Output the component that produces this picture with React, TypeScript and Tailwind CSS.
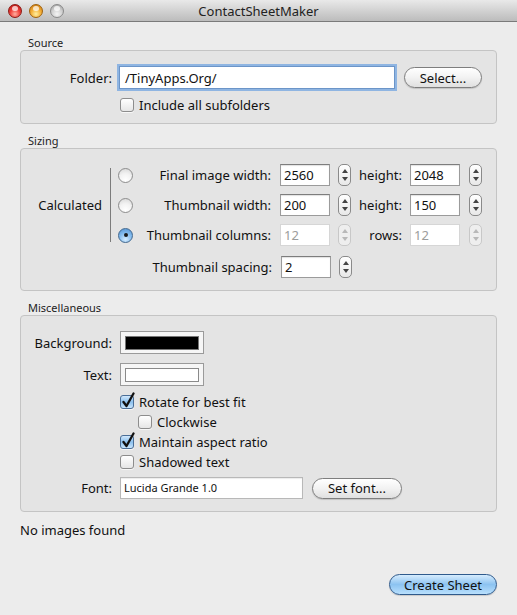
import type { ReactNode } from "react"

const font = "font-['Lucida_Grande','Noto_Sans','DejaVu_Sans',sans-serif]"

function Light({ color }: { color: "red" | "yellow" | "gray" }) {
  const fill =
    color === "red"
      ? "bg-[radial-gradient(circle_at_50%_75%,#ffb0a0_0%,#f0413a_45%,#b01010_100%)] border-[#8c1a14]"
      : color === "yellow"
      ? "bg-[radial-gradient(circle_at_50%_75%,#fff0a0_0%,#f5b23a_45%,#c4700c_100%)] border-[#a0620c]"
      : "bg-[radial-gradient(circle_at_50%_75%,#f4f4f4_0%,#cfcfcf_50%,#9a9a9a_100%)] border-[#8a8a8a]"
  return (
    <div className={`relative h-[14px] w-[14px] rounded-full border ${fill}`}>
      <div className="absolute left-[3px] top-[1px] h-[5px] w-[6px] rounded-full bg-white/70" />
    </div>
  )
}

function Group({ label, children, className = "" }: { label: string; children: ReactNode; className?: string }) {
  return (
    <div>
      <div className="pl-[8px] text-[11px] leading-[14px] text-[#222]">{label}</div>
      <div className={`rounded-[4px] border border-[#c4c4c4] bg-[#e4e4e4] ${className}`}>{children}</div>
    </div>
  )
}

function Check({ checked = false }: { checked?: boolean }) {
  return (
    <div
      className={`relative h-[14px] w-[14px] shrink-0 rounded-[3px] border ${
        checked
          ? "border-[#4a6e97] bg-gradient-to-b from-[#d2e8fb] via-[#8bc0ee] to-[#c9e6fd]"
          : "border-[#8d8d8d] bg-gradient-to-b from-[#ffffff] to-[#e6e6e6]"
      } shadow-[0_1px_0_rgba(255,255,255,0.7)]`}
    >
      {checked && (
        <svg className="absolute -top-[4px] left-[0px]" width="15" height="17" viewBox="0 0 15 17">
          <path d="M2.5 10 L5.5 14 L12.5 1.5" fill="none" stroke="#111" strokeWidth="2.3" strokeLinecap="round" strokeLinejoin="round" />
        </svg>
      )}
    </div>
  )
}

function Radio({ on = false }: { on?: boolean }) {
  return (
    <div
      className={`flex h-[15px] w-[15px] shrink-0 items-center justify-center rounded-full border ${
        on
          ? "border-[#41688f] bg-[radial-gradient(circle_at_50%_80%,#d4ecff_0%,#7fb8ec_55%,#4f8fd0_100%)]"
          : "border-[#8d8d8d] bg-[radial-gradient(circle_at_50%_85%,#ffffff_0%,#f2f2f2_50%,#d4d4d4_100%)]"
      }`}
    >
      {on && <div className="h-[4px] w-[4px] rounded-full bg-[#1a1a1a]" />}
    </div>
  )
}

function Stepper({ disabled = false }: { disabled?: boolean }) {
  const c = disabled ? "#b8b8b8" : "#444"
  return (
    <div
      className={`flex h-[22px] w-[13px] flex-col items-center justify-between rounded-[5px] border py-[4px] ${
        disabled ? "border-[#c8c8c8] bg-[#eeeeee]" : "border-[#8a8a8a] bg-gradient-to-b from-white to-[#e8e8e8]"
      }`}
    >
      <svg width="6" height="4" viewBox="0 0 6 4">
        <path d="M3 0 L6 4 L0 4 Z" fill={c} />
      </svg>
      <svg width="6" height="4" viewBox="0 0 6 4">
        <path d="M0 0 L6 0 L3 4 Z" fill={c} />
      </svg>
    </div>
  )
}

function Field({ value, w, disabled = false }: { value: string; w: string; disabled?: boolean }) {
  return (
    <div
      className={`flex h-[22px] ${w} items-center border bg-white pl-[3px] text-[13px] ${
        disabled
          ? "border-[#d6d6d6] text-[#9c9c9c]"
          : "border-[#9b9b9b] border-t-[#7d7d7d] text-[#111] shadow-[inset_0_1px_1px_rgba(0,0,0,0.12)]"
      }`}
    >
      {value}
    </div>
  )
}

function Pill({ children, w, blue = false }: { children: ReactNode; w: string; blue?: boolean }) {
  return (
    <div
      className={`flex h-[21px] ${w} items-center justify-center rounded-full border text-[13px] text-[#111] shadow-[0_1px_1px_rgba(0,0,0,0.15)] ${
        blue
          ? "border-[#2f5a8c] bg-gradient-to-b from-[#d6ecfd] via-[#8cc3f1] to-[#b9e0fd]"
          : "border-[#7e7e7e] bg-gradient-to-b from-[#ffffff] via-[#f2f2f2] to-[#e0e0e0]"
      }`}
    >
      {children}
    </div>
  )
}

function SizeRow({
  on,
  label,
  a,
  b,
  label2,
  disabled = false,
}: {
  on?: boolean
  label: string
  a: string
  b: string
  label2: string
  disabled?: boolean
}) {
  return (
    <div className="flex h-[22px] items-center">
      <Radio on={on} />
      <div className="w-[138px] text-right">{label}</div>
      <div className="ml-[9px]">
        <Field value={a} w="w-[50px]" disabled={disabled} />
      </div>
      <div className="ml-[8px]">
        <Stepper disabled={disabled} />
      </div>
      <div className="w-[51px] text-right">{label2}</div>
      <div className="ml-[8px]">
        <Field value={b} w="w-[50px]" disabled={disabled} />
      </div>
      <div className="ml-[9px]">
        <Stepper disabled={disabled} />
      </div>
    </div>
  )
}

function CheckRow({ checked, label, indent = false }: { checked?: boolean; label: string; indent?: boolean }) {
  return (
    <div className={`flex h-[20px] items-center gap-[5px] ${indent ? "pl-[117px]" : "pl-[99px]"}`}>
      <Check checked={checked} />
      <span>{label}</span>
    </div>
  )
}

export default function App() {
  return (
    <div className={`flex h-[615px] w-[517px] flex-col bg-[#ececec] text-[13px] leading-[16px] text-[#111] ${font}`}>
      <div className="relative flex h-[22px] shrink-0 items-center justify-center border-b border-[#7a7a7a] bg-gradient-to-b from-[#e9e9e9] to-[#bcbcbc]">
        <div className="absolute left-[8px] top-[4px] flex gap-[7px]">
          <Light color="red" />
          <Light color="yellow" />
          <Light color="gray" />
        </div>
        <span className="text-[13px] text-[#222]">ContactSheetMaker</span>
      </div>

      <div className="flex flex-1 flex-col px-[20px] pt-[14px]">
        <Group label="Source" className="h-[74px] pt-[15px]">
          <div className="flex items-center">
            <div className="w-[91px] text-right">Folder:</div>
            <div className="ml-[7px] flex h-[23px] w-[276px] items-center border border-[#6c95c8] bg-white pl-[5px] text-[13px] shadow-[0_0_0_2px_#8fb5e2]">
              /TinyApps.Org/
            </div>
            <div className="ml-[9px]">
              <Pill w="w-[78px]">Select...</Pill>
            </div>
          </div>
          <div className="mt-[8px] flex items-center gap-[5px] pl-[99px]">
            <Check />
            <span>Include all subfolders</span>
          </div>
        </Group>

        <div className="mt-[10px]">
          <Group label="Sizing" className="h-[143px] pt-[15px]">
            <div className="flex">
              <div className="flex w-[81px] items-center justify-end">Calculated</div>
              <div className="my-[4px] ml-[8px] w-px bg-[#7c7c7c]" />
              <div className="ml-[7px] flex flex-col gap-[8px]">
                <SizeRow label="Final image width:" a="2560" label2="height:" b="2048" />
                <SizeRow label="Thumbnail width:" a="200" label2="height:" b="150" />
                <SizeRow on label="Thumbnail columns:" a="12" label2="rows:" b="12" disabled />
              </div>
            </div>
            <div className="mt-[10px] flex h-[22px] items-center pl-[112px]">
              <div className="w-[139px] text-right">Thumbnail spacing:</div>
              <div className="ml-[9px]">
                <Field value="2" w="w-[50px]" />
              </div>
              <div className="ml-[8px]">
                <Stepper />
              </div>
            </div>
          </Group>
        </div>

        <div className="mt-[10px]">
          <Group label="Miscellaneous" className="h-[197px] pt-[15px]">
            <div className="flex items-center">
              <div className="w-[91px] text-right">Background:</div>
              <div className="ml-[8px] flex h-[23px] w-[84px] items-center justify-center border border-[#9a9a9a] bg-[#f6f6f6]">
                <div className="h-[14px] w-[74px] border border-[#777] bg-black" />
              </div>
            </div>
            <div className="mt-[9px] flex items-center">
              <div className="w-[91px] text-right">Text:</div>
              <div className="ml-[8px] flex h-[23px] w-[84px] items-center justify-center border border-[#9a9a9a] bg-[#f6f6f6]">
                <div className="h-[14px] w-[74px] border border-[#8a8a8a] bg-white" />
              </div>
            </div>
            <div className="mt-[6px]">
              <CheckRow checked label="Rotate for best fit" />
              <CheckRow indent label="Clockwise" />
              <CheckRow checked label="Maintain aspect ratio" />
              <CheckRow label="Shadowed text" />
            </div>
            <div className="mt-[5px] flex items-center">
              <div className="w-[91px] text-right">Font:</div>
              <div className="ml-[8px] flex h-[22px] w-[183px] items-center border border-[#b8b8b8] bg-white pl-[3px] text-[11px] shadow-[inset_0_1px_1px_rgba(0,0,0,0.08)]">
                Lucida Grande 1.0
              </div>
              <div className="ml-[9px]">
                <Pill w="w-[90px]">Set font...</Pill>
              </div>
            </div>
          </Group>
        </div>

        <div className="mt-[10px]">No images found</div>

        <div className="mt-auto mb-[20px] flex justify-end">
          <Pill blue w="w-[108px]">Create Sheet</Pill>
        </div>
      </div>
    </div>
  )
}
